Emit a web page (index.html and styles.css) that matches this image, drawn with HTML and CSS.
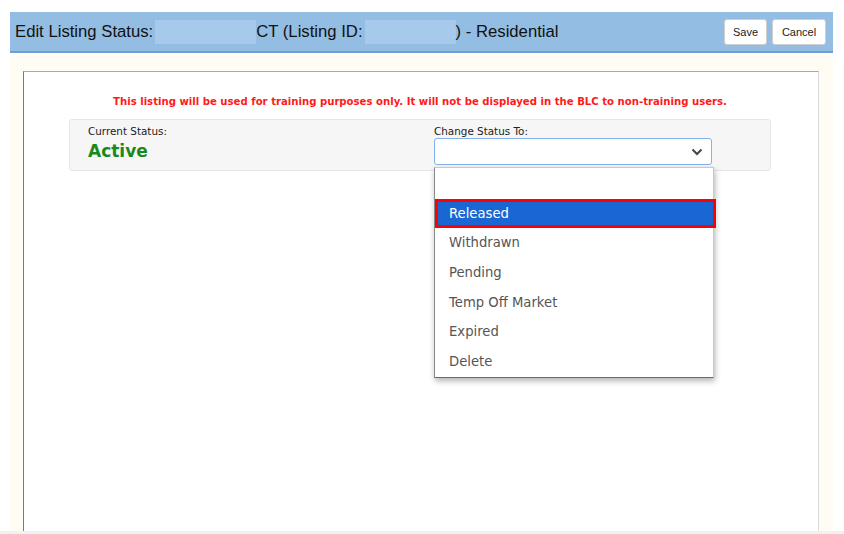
FILE: index.html
```html
<!DOCTYPE html>
<html>
<head>
<meta charset="utf-8">
<link rel="stylesheet" href="styles.css">
</head>
<body>
<div class="dialog">
  <div class="header">
    <div class="title">
      <span>Edit Listing Status:</span><span class="redact r1"></span><span>CT (Listing ID:</span><span class="redact r2"></span><span>) - Residential</span>
    </div>
    <div class="actions">
      <button class="btn">Save</button>
      <button class="btn">Cancel</button>
    </div>
  </div>
  <div class="body">
    <div class="panel">
      <p class="warning">This listing will be used for training purposes only. It will not be displayed in the BLC to non-training users.</p>
      <div class="status-box">
        <div class="col">
          <div class="label">Current Status:</div>
          <div class="active">Active</div>
        </div>
        <div class="col select-col">
          <div class="label">Change Status To:</div>
          <div class="select">
            <svg class="chev" width="12" height="8" viewBox="0 0 12 8"><path d="M1.5 1.5 L6 6 L10.5 1.5" fill="none" stroke="#444" stroke-width="2"/></svg>
          </div>
          <ul class="menu">
            <li class="opt"></li>
            <li class="opt selected">Released</li>
            <li class="opt">Withdrawn</li>
            <li class="opt">Pending</li>
            <li class="opt">Temp Off Market</li>
            <li class="opt">Expired</li>
            <li class="opt">Delete</li>
          </ul>
        </div>
      </div>
    </div>
  </div>
</div>
<div class="bottom"></div>
</body>
</html>
```
FILE: styles.css
```css
html, body {
  margin: 0;
  padding: 0;
  background: #ffffff;
  height: 534px;
  overflow: hidden;
}
.dialog {
  margin: 12px 0 0 10px;
  width: 823px;
  height: 519px;
  display: flex;
  flex-direction: column;
}
.header {
  height: 39px;
  background: #93bde2;
  border-bottom: 2px solid #6e9fd0;
  display: flex;
  align-items: center;
  justify-content: space-between;
  padding: 0 7px 0 5px;
  box-sizing: content-box;
  flex: none;
}
.title {
  display: flex;
  align-items: center;
  font-family: "Liberation Sans", Arial, sans-serif;
  font-size: 16.7px;
  color: #111;
}
.redact {
  display: inline-block;
  height: 24px;
  background: #a6c9ec;
}
.r1 { width: 101px; margin-left: 2px; }
.r2 { width: 91px; margin-left: 2px; }
.actions {
  display: flex;
  gap: 5px;
  padding-top: 1px;
}
.btn {
  height: 26px;
  background: #fff;
  border: 1px solid #cfcfcf;
  border-radius: 3px;
  font-family: "Liberation Sans", Arial, sans-serif;
  font-size: 11px;
  color: #222;
  padding: 0 8px;
}
.btn:first-child { width: 43px; padding: 0; }
.btn:last-child { width: 54px; padding: 0; }
.body {
  flex: 1;
  background: #fffdf3;
  padding: 18px 14px 0 13px;
  display: flex;
  flex-direction: column;
}
.panel {
  flex: 1;
  background: #fff;
  border-left: 1px solid #7a7a7a;
  border-top: 1px solid #a8a8a8;
  border-right: 1px solid #dcdcdc;
  padding: 0 47px 0 45px;
  font-family: "DejaVu Sans", Verdana, sans-serif;
}
.warning {
  margin: 23px -20px 0 -20px;
  text-align: center;
  color: #ff1a1a;
  font-weight: bold;
  font-size: 10.15px;
  line-height: 13px;
}
.status-box {
  margin-top: 11px;
  height: 50px;
  background: #f6f6f6;
  border: 1px solid #e6e6e6;
  border-radius: 3px;
  display: grid;
  grid-template-columns: 346px 278px;
  padding: 0 0 0 18px;
}
.col { padding-top: 5px; }
.select-col { position: relative; }
.label {
  font-size: 10.4px;
  color: #222;
  line-height: 12px;
}
.active {
  color: #198a19;
  font-weight: bold;
  font-size: 17px;
  line-height: 20px;
  margin-top: 4px;
}
.select {
  margin-top: 1px;
  height: 27px;
  border: 1px solid #82b3ea;
  border-radius: 3px;
  background: #fff;
  box-sizing: border-box;
  position: relative;
}
.chev {
  position: absolute;
  right: 8px;
  top: 9px;
}
.menu {
  position: absolute;
  left: 0;
  top: 47px;
  width: 280px;
  box-sizing: border-box;
  margin: 0;
  padding: 1px 0 0 0;
  list-style: none;
  background: #fff;
  border-left: 1px solid #8a8a8a;
  border-top: 1px solid #c8c8c8;
  border-right: 1px solid #c8c8c8;
  border-bottom: 1px solid #6a6a6a;
  box-shadow: 1px 3px 6px rgba(0,0,0,0.3);
}
.opt {
  height: 29.7px;
  line-height: 29.7px;
  padding-left: 14px;
  font-size: 13.2px;
  color: #555;
  box-sizing: border-box;
}
.opt.selected {
  background: #1a66d3;
  color: #fff;
  border: 3px solid #ff0000;
  margin: 0 -3px 0 0;
  line-height: 23.7px;
  padding-left: 11px;
}
.bottom {
  height: 3px;
  background: #f1f1f1;
}
```
